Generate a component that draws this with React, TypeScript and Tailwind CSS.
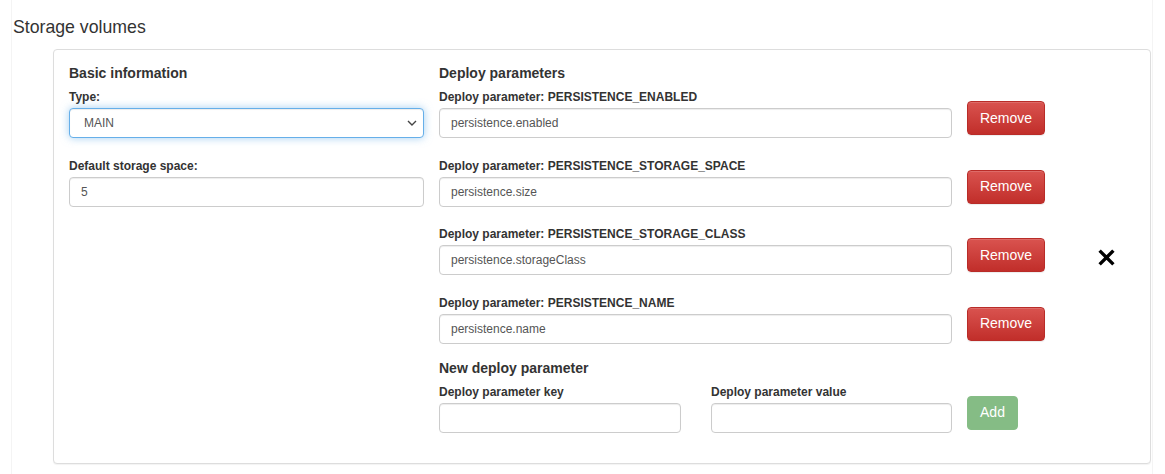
import React from 'react';

interface ParamRowProps {
  name: string;
  value: string;
  showClose?: boolean;
}

const inputClass =
  'h-[30px] w-full rounded-[4px] border border-[#ccc] bg-white px-[11px] text-[12px] text-[#555] shadow-[inset_0_1px_1px_rgba(0,0,0,0.075)] outline-none';

const ParamRow: React.FC<ParamRowProps> = ({ name, value, showClose }) => {
  return (
    <div className="flex items-start">
      <div className="w-[513px]">
        <label className="block h-[15px] text-[12px] font-bold leading-[15px] text-[#333]">
          Deploy parameter: {name}
        </label>
        <input className={`${inputClass} mt-[3px]`} defaultValue={value} readOnly />
      </div>
      <button className="ml-[15px] mt-[11px] h-[34px] w-[78px] rounded-[4px] border border-[#b92c28] bg-[linear-gradient(to_bottom,#d9534f_0%,#c12e2a_100%)] text-[14px] text-white shadow-[inset_0_1px_0_rgba(255,255,255,0.15),0_1px_1px_rgba(0,0,0,0.075)]">
        Remove
      </button>
      {showClose && (
        <svg className="ml-[53px] mt-[22px]" width="17" height="17" viewBox="0 0 18 18">
          <path d="M3 3 L15 15 M15 3 L3 15" stroke="#000" strokeWidth="3.6" strokeLinecap="square" />
        </svg>
      )}
    </div>
  );
};

const params = [
  { name: 'PERSISTENCE_ENABLED', value: 'persistence.enabled' },
  { name: 'PERSISTENCE_STORAGE_SPACE', value: 'persistence.size' },
  { name: 'PERSISTENCE_STORAGE_CLASS', value: 'persistence.storageClass', showClose: true },
  { name: 'PERSISTENCE_NAME', value: 'persistence.name' },
];

const App: React.FC = () => {
  return (
    <div className="min-h-[474px] bg-white font-['Liberation_Sans',Arial,sans-serif] text-[#333]">
      <div className="ml-[11px] min-h-[474px] w-[1142px] border-x border-[#f4f4f4]">
        {/* Page Header */}
        <h2 className="pt-[16px] pl-[1px] text-[17.7px] leading-[22px] text-[#333]">Storage volumes</h2>

        {/* Main Card */}
        <div className="ml-[41px] mt-[11px] h-[415px] w-[1098px] rounded-[4px] border border-[#ddd] bg-white shadow-[0_1px_1px_rgba(0,0,0,0.05)]">
          <div className="flex pl-[15px] pt-[13px]">
            {/* Basic information */}
            <div className="w-[355px]">
              <h3 className="h-[20px] text-[14px] font-bold leading-[20px]">Basic information</h3>
              <label className="mt-[7px] block h-[15px] text-[12px] font-bold leading-[15px]">Type:</label>
              <div className="relative mt-[3px]">
                <div className="flex h-[30px] w-full items-center rounded-[4px] border border-[#66afe9] bg-white pl-[14px] text-[12px] text-[#555] shadow-[inset_0_1px_1px_rgba(0,0,0,0.075),0_0_8px_rgba(102,175,233,0.6)]">
                  MAIN
                </div>
                <svg className="absolute right-[7px] top-[12px]" width="10" height="7" viewBox="0 0 10 7">
                  <path d="M1 1 L5 5 L9 1" fill="none" stroke="#444" strokeWidth="1.4" />
                </svg>
              </div>
              <label className="mt-[21px] block h-[15px] text-[12px] font-bold leading-[15px]">
                Default storage space:
              </label>
              <input className={`${inputClass} mt-[3px]`} defaultValue="5" readOnly />
            </div>

            {/* Deploy parameters */}
            <div className="ml-[15px] flex-1">
              <h3 className="h-[20px] text-[14px] font-bold leading-[20px]">Deploy parameters</h3>
              <div className="mt-[7px] flex flex-col gap-[20.6px]">
                {params.map((p) => (
                  <ParamRow key={p.name} name={p.name} value={p.value} showClose={p.showClose} />
                ))}
              </div>

              <h3 className="mt-[14px] h-[20px] text-[14px] font-bold leading-[20px]">New deploy parameter</h3>
              <div className="mt-[7px] flex items-start">
                <div className="w-[242px]">
                  <label className="block h-[15px] text-[12px] font-bold leading-[15px]">Deploy parameter key</label>
                  <input className={`${inputClass} mt-[3px]`} readOnly />
                </div>
                <div className="ml-[30px] w-[241px]">
                  <label className="block h-[15px] text-[12px] font-bold leading-[15px]">Deploy parameter value</label>
                  <input className={`${inputClass} mt-[3px]`} readOnly />
                </div>
                <button className="ml-[15px] mt-[11px] h-[34px] w-[51px] rounded-[4px] border border-[#86bd86] bg-[#85bc85] text-[14px] text-white">
                  Add
                </button>
              </div>
            </div>
          </div>
        </div>
      </div>
    </div>
  );
};

export default App;
